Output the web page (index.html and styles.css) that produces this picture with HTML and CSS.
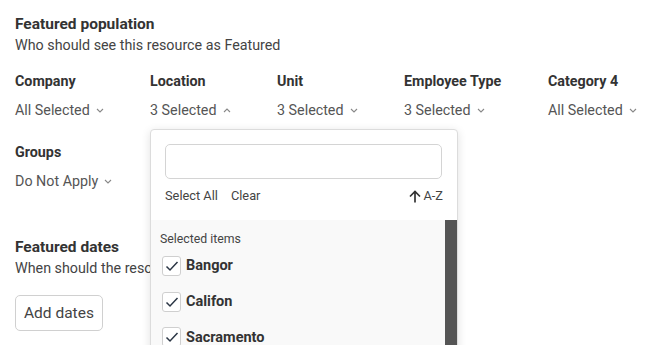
FILE: index.html
```html
<!DOCTYPE html>
<html lang="en">
<head>
  <meta charset="UTF-8" />
  <meta name="viewport" content="width=device-width, initial-scale=1.0" />
  <title>Featured</title>
  <link rel="stylesheet" href="styles.css">
</head>
<body>
  <div class="page">
    <section class="section">
      <h2>Featured population</h2>
      <p class="hint">Who should see this resource as Featured</p>

      <div class="filters">
        <div class="filter">
          <div class="label">Company</div>
          <div class="value">All Selected <svg class="chev" width="8" height="5" viewBox="0 0 8 5"><path d="M1 1l3 3 3-3" fill="none" stroke="#888" stroke-width="1.1"/></svg></div>
        </div>
        <div class="filter open">
          <div class="label">Location</div>
          <div class="value">3 Selected <svg class="chev" width="8" height="5" viewBox="0 0 8 5"><path d="M1 4l3-3 3 3" fill="none" stroke="#888" stroke-width="1.1"/></svg></div>

          <div class="dropdown">
            <div class="dd-head">
              <input type="text" class="search">
              <div class="dd-actions">
                <span>Select All</span>
                <span>Clear</span>
                <span class="sort"><svg width="12" height="13" viewBox="0 0 12 13"><path d="M6 12.5V1.5M1 6.5l5-5 5 5" fill="none" stroke="#333" stroke-width="1.7"/></svg>A-Z</span>
              </div>
            </div>
            <div class="dd-body">
              <div class="dd-list">
                <div class="dd-caption">Selected items</div>
                <label class="item"><span class="box"><svg width="14" height="12" viewBox="0 0 14 12"><path d="M1.5 6.5l3.5 3.5 7.5-8" fill="none" stroke="#2b3645" stroke-width="1.5"/></svg></span>Bangor</label>
                <label class="item"><span class="box"><svg width="14" height="12" viewBox="0 0 14 12"><path d="M1.5 6.5l3.5 3.5 7.5-8" fill="none" stroke="#2b3645" stroke-width="1.5"/></svg></span>Califon</label>
                <label class="item"><span class="box"><svg width="14" height="12" viewBox="0 0 14 12"><path d="M1.5 6.5l3.5 3.5 7.5-8" fill="none" stroke="#2b3645" stroke-width="1.5"/></svg></span>Sacramento</label>
              </div>
              <div class="scrollbar"></div>
            </div>
          </div>
        </div>
        <div class="filter">
          <div class="label">Unit</div>
          <div class="value">3 Selected <svg class="chev" width="8" height="5" viewBox="0 0 8 5"><path d="M1 1l3 3 3-3" fill="none" stroke="#888" stroke-width="1.1"/></svg></div>
        </div>
        <div class="filter">
          <div class="label">Employee Type</div>
          <div class="value">3 Selected <svg class="chev" width="8" height="5" viewBox="0 0 8 5"><path d="M1 1l3 3 3-3" fill="none" stroke="#888" stroke-width="1.1"/></svg></div>
        </div>
        <div class="filter">
          <div class="label">Category 4</div>
          <div class="value">All Selected <svg class="chev" width="8" height="5" viewBox="0 0 8 5"><path d="M1 1l3 3 3-3" fill="none" stroke="#888" stroke-width="1.1"/></svg></div>
        </div>
        <div class="filter">
          <div class="label">Groups</div>
          <div class="value">Do Not Apply <svg class="chev" width="8" height="5" viewBox="0 0 8 5"><path d="M1 1l3 3 3-3" fill="none" stroke="#888" stroke-width="1.1"/></svg></div>
        </div>
      </div>
    </section>

    <section class="section dates">
      <h2>Featured dates</h2>
      <p class="hint clipped">When should the resource be Featured</p>
      <button class="btn">Add dates</button>
    </section>
  </div>
</body>
</html>
```

FILE: styles.css
```css
body {
  margin: 0;
  font-family: Roboto, "Liberation Sans", sans-serif;
  color: #333;
  background: #fff;
  overflow: hidden;
}

.page {
  padding: 14px 15px;
}

h2 {
  margin: 0;
  font-size: 15.5px;
  line-height: 21px;
  font-weight: 700;
  color: #333;
}

.hint {
  margin: 0;
  font-size: 14.3px;
  line-height: 20px;
  color: #444;
  white-space: nowrap;
}

/* the open dropdown hides the rest of this line */
.hint.clipped {
  width: 135px;
  overflow: hidden;
}

.filters {
  display: grid;
  grid-template-columns: 135px 127px 127px 144px auto;
  row-gap: 22px;
  margin-top: 16px;
}

.filter {
  position: relative;
}

.label {
  font-size: 14.3px;
  line-height: 20px;
  font-weight: 700;
  color: #333;
}

.value {
  margin-top: 9px;
  font-size: 14.3px;
  line-height: 20px;
  color: #555;
  display: flex;
  align-items: center;
  gap: 6px;
  white-space: nowrap;
}

.chev {
  margin-top: 1px;
}

.dates {
  margin-top: 46px;
}

.btn {
  margin-top: 17px;
  height: 36px;
  padding: 0 8px;
  font-family: inherit;
  font-size: 15.5px;
  color: #444;
  background: #fff;
  border: 1px solid #d0d0d0;
  border-radius: 5px;
}

/* location dropdown */
.dropdown {
  position: absolute;
  top: 58px;
  left: 0;
  width: 306px;
  height: 260px;
  background: #fff;
  border: 1px solid #dcdcdc;
  border-radius: 4px;
  box-shadow: 0 2px 10px rgba(0,0,0,0.12);
  z-index: 5;
  overflow: hidden;
}

.dd-head {
  padding: 14px 14px 0 14px;
  height: 76px;
}

.search {
  display: block;
  box-sizing: border-box;
  width: 277px;
  height: 35px;
  border: 1px solid #d4d4d4;
  border-radius: 5px;
  outline: none;
}

.dd-actions {
  display: flex;
  gap: 13px;
  margin-top: 8px;
  font-size: 12.8px;
  line-height: 18px;
  color: #444;
}

.sort {
  margin-left: auto;
  display: flex;
  align-items: center;
  gap: 2px;
}

.dd-body {
  display: flex;
  background: #f9f9f9;
  height: 100%;
}

.dd-list {
  flex: 1;
  padding: 11px 9px;
}

.dd-caption {
  font-size: 12.3px;
  line-height: 16px;
  color: #444;
}

.item {
  display: flex;
  align-items: center;
  gap: 5px;
  height: 35.5px;
  margin-left: 2px;
  font-size: 14.5px;
  font-weight: 700;
  color: #333;
}

.item:first-of-type {
  height: 37px;
}

.box {
  box-sizing: border-box;
  width: 19px;
  height: 20px;
  border: 1px solid #cfcfcf;
  border-radius: 3px;
  background: #fff;
  display: flex;
  align-items: center;
  justify-content: center;
}

.scrollbar {
  width: 12px;
  background: #555;
}
```
